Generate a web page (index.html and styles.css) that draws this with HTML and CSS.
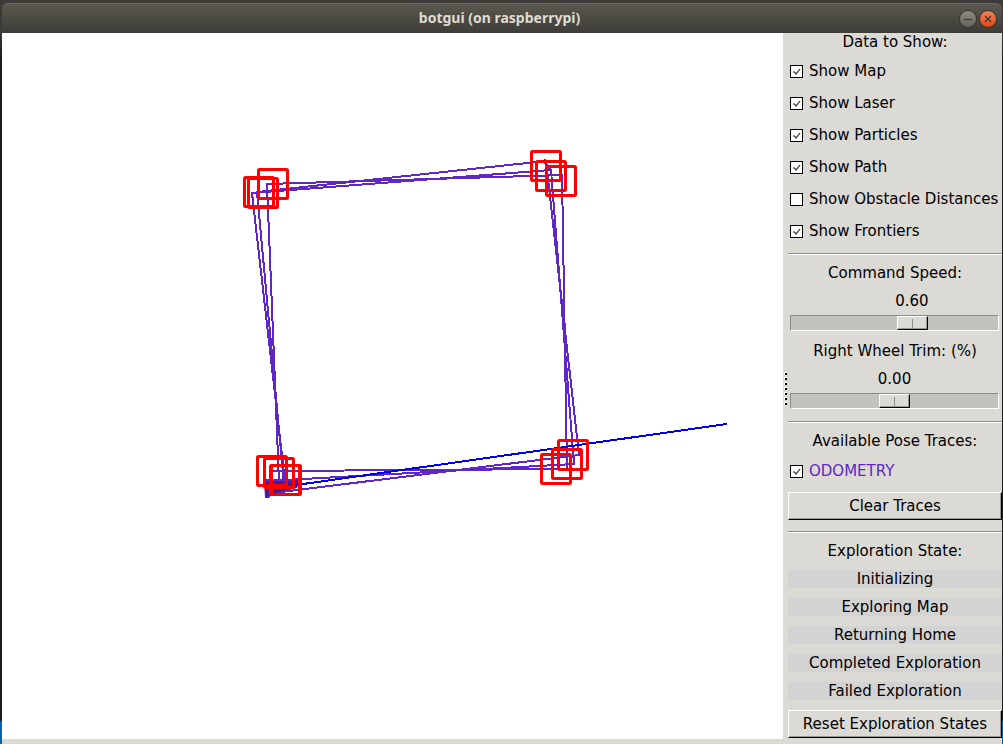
FILE: index.html
```html
<!DOCTYPE html>
<html lang="en">
<head>
<meta charset="utf-8">
<title>botgui (on raspberrypi)</title>
<link rel="stylesheet" href="styles.css">
</head>
<body>
<div class="window">
  <header class="titlebar">
    <h1 class="title">botgui (on raspberrypi)</h1>
    <div class="window-buttons">
      <button class="window-button" type="button" aria-label="Minimize"><svg viewBox="0 0 16 16"><path d="M4 8.5h8"/></svg></button>
      <button class="window-button close" type="button" aria-label="Close"><svg viewBox="0 0 16 16"><path d="M5 5l6 6M11 5l-6 6"/></svg></button>
    </div>
  </header>
  <main class="content">
    <svg class="map" viewBox="2 33 781 706" preserveAspectRatio="xMinYMin meet" role="img" aria-label="Robot pose traces">
      <path class="trail" d="M264 479L300 480L297 488L286 491L272 494L269 498L265 498Z"/>
      <g class="trace" shape-rendering="crispEdges">
        <path d="M263 481L285 480L574 464L551 170L252 193L285 482"/>
        <path d="M265 494L579 455L546 161L257 192L284 484"/>
        <path d="M272 471L567 469L562 175L267 184L279 482"/>
        <path d="M551 170L545 163L545 159M579 455L578 441M574 464L573 450M265 497L295 485"/>
      </g>
      <path class="heading" shape-rendering="crispEdges" d="M296 485L727 424"/>
      <path class="trail" d="M264 481L290 482L286 490L266 497Z"/>
      <g class="pose" transform="translate(-0.5 -0.5)">
        <rect x="245" y="178" width="29" height="29" rx="1"/>
        <rect x="249" y="179" width="29" height="29" rx="1"/>
        <rect x="259" y="170" width="29" height="29" rx="1"/>
        <rect x="532" y="152" width="29" height="29" rx="1"/>
        <rect x="537" y="162" width="29" height="29" rx="1"/>
        <rect x="547" y="167" width="29" height="29" rx="1"/>
        <rect x="559" y="441" width="29" height="29" rx="1"/>
        <rect x="553" y="450" width="29" height="29" rx="1"/>
        <rect x="542" y="455" width="29" height="29" rx="1"/>
        <rect x="258" y="457" width="29" height="29" rx="1"/>
        <rect x="265" y="459" width="29" height="29" rx="1"/>
        <rect x="271" y="466" width="29" height="29" rx="1"/>
        <rect x="272" y="466" width="29" height="29" rx="1"/>
      </g>
    </svg>
    <div class="sash"><i></i><i></i><i></i><i></i><i></i><i></i><i></i></div>
    <aside class="panel">
      <p class="label">Data to Show:</p>
      <div class="checks">
        <label class="check"><input type="checkbox" checked>Show Map</label>
        <label class="check"><input type="checkbox" checked>Show Laser</label>
        <label class="check"><input type="checkbox" checked>Show Particles</label>
        <label class="check"><input type="checkbox" checked>Show Path</label>
        <label class="check"><input type="checkbox">Show Obstacle Distances</label>
        <label class="check"><input type="checkbox" checked>Show Frontiers</label>
      </div>
      <hr>
      <div class="sliders">
        <div class="slider">
          <label class="label" for="speed">Command Speed:</label>
          <output class="value" for="speed" style="--position: 0.6">0.60</output>
          <input class="range" id="speed" type="range" min="0" max="1" step="0.01" value="0.6">
        </div>
        <div class="slider">
          <label class="label" for="trim">Right Wheel Trim: (%)</label>
          <output class="value" for="trim" style="--position: 0.5">0.00</output>
          <input class="range" id="trim" type="range" min="-1" max="1" step="0.01" value="0">
        </div>
      </div>
      <hr>
      <div class="traces">
        <p class="label">Available Pose Traces:</p>
        <label class="check odometry"><input type="checkbox" checked>ODOMETRY</label>
        <button class="push" type="button">Clear Traces</button>
      </div>
      <hr>
      <div class="states">
        <p class="label">Exploration State:</p>
        <p class="label state">Initializing</p>
        <p class="label state">Exploring Map</p>
        <p class="label state">Returning Home</p>
        <p class="label state">Completed Exploration</p>
        <p class="label state">Failed Exploration</p>
        <button class="push" type="button">Reset Exploration States</button>
      </div>
    </aside>
  </main>
</div>
</body>
</html>
```
FILE: styles.css
```css
* { box-sizing: border-box; }

body {
  margin: 0;
  padding: 3px 1px 0 2px;
  height: 100vh;
  overflow: hidden;
  background: linear-gradient(#3c3b37 32px, #1b1b1d 60px, #1b1b1d 720px, #0862a5 722px);
  color: #000;
  font: 15px/18px "DejaVu Sans", sans-serif;
}

.window {
  display: flex;
  flex-direction: column;
  height: 100%;
}

.titlebar {
  display: grid;
  grid-template-columns: 1fr auto 1fr;
  align-items: center;
  height: 30px;
  padding-right: 5px;
  border-top: 1px solid #69685e;
  border-radius: 6px 6px 0 0;
  background: linear-gradient(#5a584e, #3d3c37);
}

.title {
  grid-column: 2;
  margin: 0;
  padding-bottom: 2px;
  color: #dfdbd2;
  font: bold 14px/20px "Noto Sans", "Open Sans", sans-serif;
}

.window-buttons {
  display: flex;
  gap: 2px;
  justify-self: end;
}

.window-button {
  width: 18px;
  height: 18px;
  padding: 0;
  border: 1px solid #35342f;
  border-radius: 50%;
  background: linear-gradient(#8d8b82, #65645c);
}

.window-button.close { background: linear-gradient(#f5815c, #dd4814); }

.window-button svg {
  display: block;
  width: 16px;
  height: 16px;
  fill: none;
  stroke: #3a3933;
  stroke-width: 1.2;
}

.content {
  display: flex;
  flex: 1;
  min-height: 0;
  background: #dcdad5;
}

.map {
  flex: 1;
  min-width: 0;
  margin-bottom: 5px;
  background: #fff;
}

.trace, .heading, .pose { fill: none; stroke-width: 2; }
.trace { stroke: #5f26c9; }
.heading { stroke: #0000e6; }
.pose { stroke: #f00; stroke-width: 3; }
.trail { fill: #461c91; }

.sash {
  display: flex;
  flex-direction: column;
  justify-content: center;
  align-items: center;
  gap: 2px;
  width: 5px;
}

.sash i {
  width: 3px;
  height: 3px;
  border: solid #fff;
  border-width: 1px 0 0 1px;
  background: #000;
}

.panel {
  display: flex;
  flex-direction: column;
  width: 214px;
}

.label {
  display: block;
  margin: 0;
  text-align: center;
  white-space: nowrap;
}

.checks {
  display: grid;
  gap: 14px;
  padding: 11px 0 13px;
}

.check {
  display: flex;
  align-items: center;
  gap: 6px;
  padding-left: 2px;
  white-space: nowrap;
}

.check input {
  appearance: none;
  flex: none;
  width: 13px;
  height: 13px;
  margin: 0;
  border: 1px solid #000;
  background: #fff;
}

.check input:checked {
  background: #fff url("data:image/svg+xml,%3Csvg xmlns='http://www.w3.org/2000/svg' viewBox='0 0 11 11'%3E%3Cpath d='M2 6h1.500L5 8 9 3' fill='none' stroke='%23222' stroke-width='1.2'/%3E%3C/svg%3E");
}

.odometry { color: #5f26c9; }

hr {
  flex: none;
  height: 2px;
  width: 100%;
  margin: 0;
  border: solid #8f8d88;
  border-width: 1px 0 0;
  background: #fff;
}

.sliders {
  display: grid;
  gap: 11px;
  padding: 9px 0 12px;
}

.slider {
  display: grid;
  gap: 10px;
}

.value {
  width: 35px;
  margin-left: calc(2px + (100% - 40px) * var(--position));
  text-align: center;
}

.range {
  appearance: none;
  width: auto;
  height: 16px;
  margin: -5px 3px 0 2px;
  border: 1px solid;
  border-color: #8f8d88 #fff #fff #8f8d88;
  background: #c4c2bd;
}

.range::-webkit-slider-thumb {
  appearance: none;
  width: 31px;
  height: 14px;
  border: 1px solid;
  border-color: #fff #000 #000 #fff;
  background: linear-gradient(#8f8d88, #8f8d88) 14px 2px / 1px 9px no-repeat, #dcdad5;
  box-shadow: inset -1px -1px #9a9892;
}

.traces {
  display: grid;
  gap: 12px;
  padding: 9px 0 11px;
}

.push {
  height: 28px;
  padding: 0;
  border: 1px solid;
  border-color: #fff #000 #000 #fff;
  background: #dcdad5;
  box-shadow: inset -1px -1px #9a9892;
  color: inherit;
  font: inherit;
  white-space: nowrap;
}

.states {
  display: grid;
  gap: 10px;
  padding-top: 9px;
}

.state { background: #d3d3d3; }
```
